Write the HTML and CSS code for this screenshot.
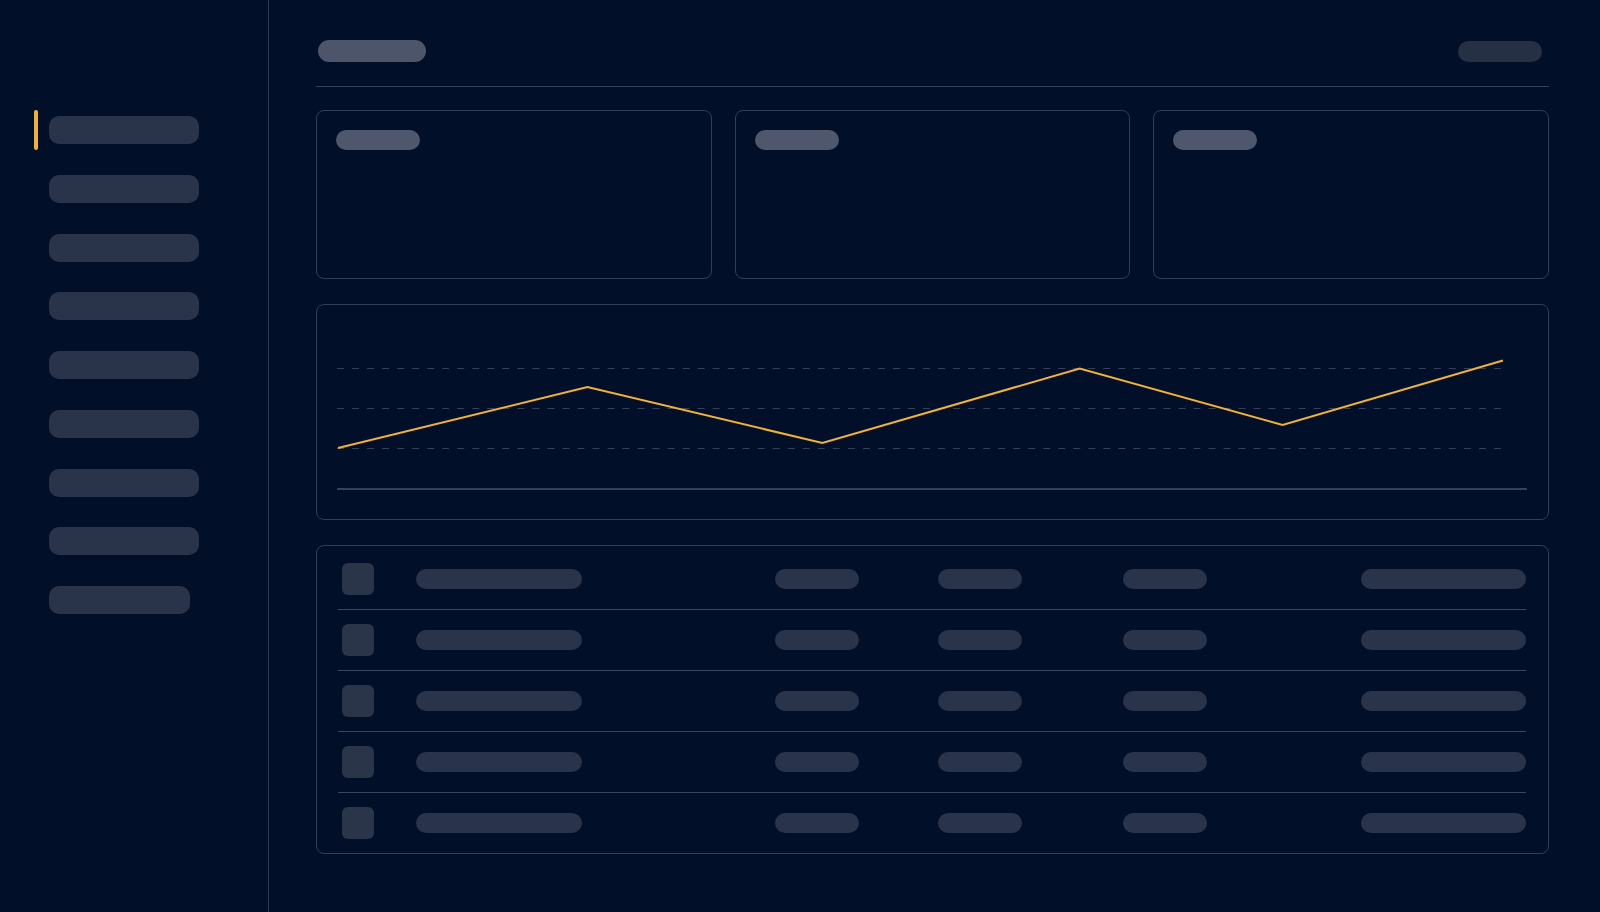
FILE: index.html
```html
<!DOCTYPE html>
<html lang="en">
<head>
<meta charset="utf-8">
<title>Dashboard</title>
<link rel="stylesheet" href="styles.css">
</head>
<body>
<div class="app">
  <aside class="sidebar">
    <nav class="nav">
      <div class="nav-row active"><span class="marker"></span><span class="nav-pill"></span></div>
      <div class="nav-row"><span class="marker"></span><span class="nav-pill"></span></div>
      <div class="nav-row"><span class="marker"></span><span class="nav-pill"></span></div>
      <div class="nav-row"><span class="marker"></span><span class="nav-pill"></span></div>
      <div class="nav-row"><span class="marker"></span><span class="nav-pill"></span></div>
      <div class="nav-row"><span class="marker"></span><span class="nav-pill"></span></div>
      <div class="nav-row"><span class="marker"></span><span class="nav-pill"></span></div>
      <div class="nav-row"><span class="marker"></span><span class="nav-pill"></span></div>
      <div class="nav-row"><span class="marker"></span><span class="nav-pill short"></span></div>
    </nav>
  </aside>
  <main class="main">
    <header class="header">
      <span class="title-pill"></span>
      <span class="action-pill"></span>
    </header>
    <section class="content">
      <div class="cards">
        <div class="card"><span class="card-pill"></span></div>
        <div class="card"><span class="card-pill"></span></div>
        <div class="card"><span class="card-pill"></span></div>
      </div>
      <div class="chart">
        <svg class="chart-svg" viewBox="0 0 1229 214" preserveAspectRatio="none">
          <line class="grid" x1="20" y1="63.5" x2="1185" y2="63.5"/>
          <line class="grid" x1="20" y1="103.5" x2="1185" y2="103.5"/>
          <line class="grid" x1="20" y1="143.5" x2="1185" y2="143.5"/>
          <line class="base" x1="20" y1="184" x2="1208" y2="184"/>
          <polyline class="series" points="21,143 270,82 504.5,138 761.5,63.5 964,120 1184,55.5"/>
        </svg>
      </div>
      <div class="table">
        <div class="row"><span class="check"></span><span class="pill w-name"></span><span class="pill w-s"></span><span class="pill w-s"></span><span class="pill w-s"></span><span class="pill w-l"></span></div>
        <div class="row"><span class="check"></span><span class="pill w-name"></span><span class="pill w-s"></span><span class="pill w-s"></span><span class="pill w-s"></span><span class="pill w-l"></span></div>
        <div class="row"><span class="check"></span><span class="pill w-name"></span><span class="pill w-s"></span><span class="pill w-s"></span><span class="pill w-s"></span><span class="pill w-l"></span></div>
        <div class="row"><span class="check"></span><span class="pill w-name"></span><span class="pill w-s"></span><span class="pill w-s"></span><span class="pill w-s"></span><span class="pill w-l"></span></div>
        <div class="row"><span class="check"></span><span class="pill w-name"></span><span class="pill w-s"></span><span class="pill w-s"></span><span class="pill w-s"></span><span class="pill w-l"></span></div>
      </div>
    </section>
  </main>
</div>
</body>
</html>
```

FILE: styles.css
```css
* { box-sizing: border-box; }

html, body {
  margin: 0;
  padding: 0;
  height: 100%;
  background: #020f29;
  font-family: "Inter", "Liberation Sans", sans-serif;
}

.app {
  display: flex;
  width: 1600px;
  height: 912px;
  overflow: hidden;
}

/* Sidebar */
.sidebar {
  width: 269px;
  flex: 0 0 269px;
  border-right: 1px solid #2e3a55;
  background: #020f28;
  padding: 110px 0 0 34px;
}

.nav {
  display: flex;
  flex-direction: column;
  gap: 18.75px;
}

.nav-row {
  display: flex;
  align-items: center;
  gap: 11px;
  height: 40px;
}

.marker {
  width: 4px;
  height: 40px;
  border-radius: 2px;
  background: transparent;
}

.nav-row.active .marker {
  background: #f2b233;
}

.nav-pill {
  width: 150px;
  height: 28px;
  border-radius: 10px;
  background: #29344a;
}

.nav-pill.short {
  width: 141px;
}

/* Main */
.main {
  flex: 1;
  display: flex;
  flex-direction: column;
  padding: 0 51px 0 47px;
}

.header {
  display: flex;
  justify-content: space-between;
  align-items: flex-start;
  height: 87px;
  padding: 40px 7px 0 2px;
  border-bottom: 1px solid #323f59;
}

.title-pill {
  width: 108px;
  height: 22px;
  border-radius: 11px;
  background: #4c5569;
}

.action-pill {
  width: 84px;
  height: 21px;
  margin-top: 1px;
  border-radius: 10.5px;
  background: #263045;
}

.content {
  display: flex;
  flex-direction: column;
  gap: 25px;
  padding-top: 23px;
}

.cards {
  display: grid;
  grid-template-columns: repeat(3, 1fr);
  gap: 23px;
}

.card {
  height: 169px;
  border: 1px solid #313e58;
  border-radius: 8px;
  padding: 19px 19px;
}

.card-pill {
  display: block;
  width: 84px;
  height: 20px;
  border-radius: 10px;
  background: #4e576b;
}

/* Chart */
.chart {
  height: 216px;
  border: 1px solid #313e58;
  border-radius: 8px;
}

.chart-svg {
  display: block;
  width: 100%;
  height: 100%;
}

.grid {
  stroke: #34415b;
  stroke-width: 1;
  stroke-dasharray: 7 8;
}

.base {
  stroke: #46536e;
  stroke-width: 1.5;
}

.series {
  fill: none;
  stroke: #f2b233;
  stroke-width: 2;
  stroke-linejoin: miter;
}

/* Table */
.table {
  border: 1px solid #313e58;
  border-radius: 8px;
  padding: 3px 22px 0 21px;
}

.row {
  display: grid;
  grid-template-columns: 74px 359px 163px 185px 238px 165px;
  align-items: center;
  height: 61px;
  padding-left: 4px;
  border-bottom: 1px solid #38455f;
}

.row:last-child {
  border-bottom: none;
  height: 60px;
}

.check {
  width: 32px;
  height: 32px;
  border-radius: 6px;
  background: #2a3549;
}

.pill {
  height: 20px;
  border-radius: 10px;
  background: #29344a;
}

.w-name { width: 166px; }
.w-s { width: 84px; }
.w-l { width: 165px; }
```
